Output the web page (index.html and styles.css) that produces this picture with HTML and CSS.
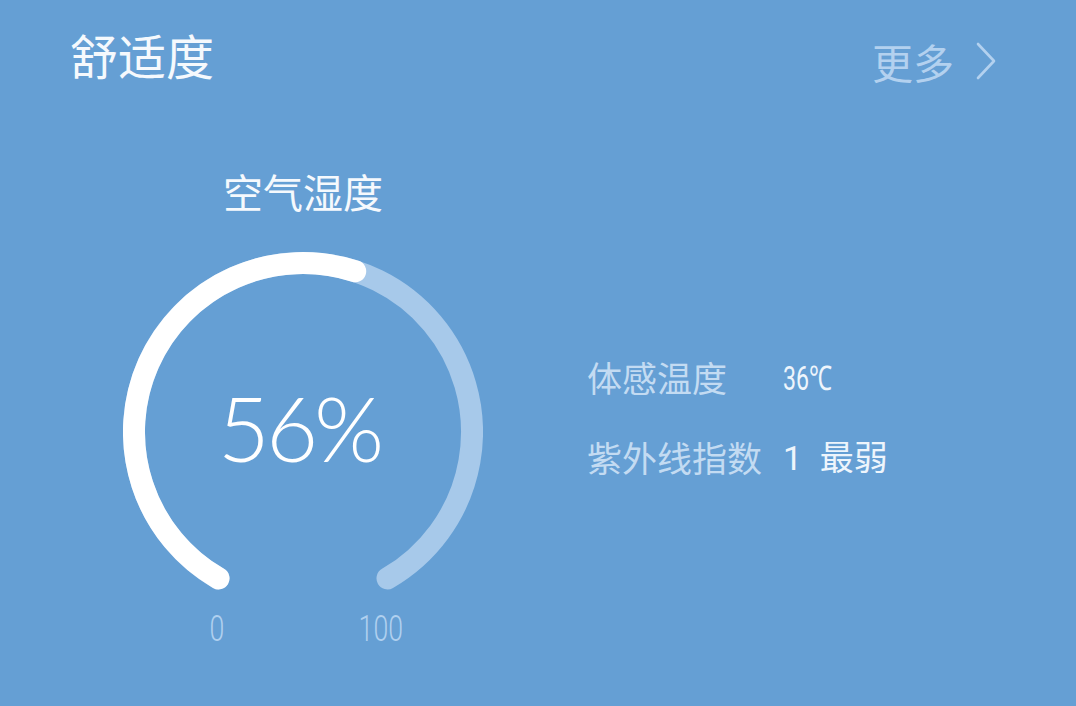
FILE: index.html
```html
<!DOCTYPE html>
<html lang="zh">
<head>
<meta charset="utf-8">
<title>舒适度</title>
<link rel="stylesheet" href="styles.css">
</head>
<body>
<div class="card">
  <header class="head">
    <h1 class="title">舒适度</h1>
    <a class="more">更多<svg class="chev" viewBox="0 0 24 40" width="24" height="40"><path d="M4 3 L20 20 L4 37" fill="none" stroke="#b3d1ef" stroke-width="2.6" stroke-linecap="round" stroke-linejoin="round"/></svg></a>
  </header>
  <main class="body">
    <section class="gauge">
      <h2 class="gauge-title">空气湿度</h2>
      <svg class="ring" viewBox="0 0 360 340" width="360" height="340">
        <path d="M95.5 326.4 A169 169 0 1 1 264.5 326.4" fill="none" stroke="#a7c9ea" stroke-width="22" stroke-linecap="round"/>
        <path d="M95.5 326.4 A169 169 0 0 1 232.2 19.3" fill="none" stroke="#ffffff" stroke-width="22" stroke-linecap="round"/>
        <text class="pct" x="176" y="210" text-anchor="middle">56%</text>
      </svg>
      <div class="scale"><span class="num">0</span><span class="num">100</span></div>
    </section>
    <section class="info">
      <div class="label">体感温度</div><div class="value"><span class="num">36℃</span></div>
      <div class="label">紫外线指数</div><div class="value"><span class="num one">1</span> 最弱</div>
    </section>
  </main>
</div>
</body>
</html>
```
FILE: styles.css
```css
html, body {
  margin: 0;
  padding: 0;
}
body {
  background: #659fd4;
  width: 1076px;
  height: 706px;
  overflow: hidden;
  font-family: "Noto Sans CJK SC", "Noto Sans", sans-serif;
}
.card {
  padding: 22px 78px 0 70px;
}
.head {
  display: flex;
  justify-content: space-between;
  align-items: center;
}
.title {
  margin: 0;
  font-size: 48px;
  font-weight: 400;
  line-height: 62px;
  color: #f5f9fd;
}
.more {
  display: flex;
  align-items: center;
  gap: 20px;
  font-size: 41px;
  line-height: 50px;
  color: #b3d1ef;
  margin-top: 14px;
}
.chev {
  display: block;
}
.body {
  display: flex;
  align-items: flex-start;
  margin-top: 79px;
}
.gauge {
  width: 360px;
  margin-left: 53px;
  display: flex;
  flex-direction: column;
}
.gauge-title {
  margin: 0;
  text-align: center;
  font-size: 40px;
  font-weight: 400;
  line-height: 52px;
  color: #f5f9fd;
}
.ring {
  display: block;
  margin-top: 35px;
}
.pct {
  font-family: "Lato", "Open Sans", sans-serif;
  font-weight: 300;
  font-size: 90px;
  letter-spacing: -4px;
  fill: #ffffff;
}
.scale {
  display: flex;
  justify-content: space-between;
  padding: 0 90px 0 74px;
  margin-top: 15px;
}
.scale .num {
  width: 40px;
  text-align: center;
  font-family: "Roboto", sans-serif;
  font-weight: 300;
  font-size: 37px;
  line-height: 44px;
  color: #b0d0ef;
  display: inline-block;
  transform: scaleX(0.72);
}
.info {
  margin-left: 104px;
  margin-top: 187px;
  display: grid;
  grid-template-columns: auto auto;
  column-gap: 21px;
  row-gap: 30px;
  align-items: center;
}
.label {
  font-size: 35px;
  line-height: 48px;
  color: #c3dbf2;
}
.value {
  font-size: 34px;
  line-height: 48px;
  color: #eef5fc;
}
.value .num {
  display: inline-block;
  font-family: "Roboto", sans-serif;
  font-weight: 400;
  font-size: 34px;
  transform: scaleX(0.68);
  transform-origin: left center;
}
.value .num.one {
  transform: none;
  margin-right: 10px;
}
```
